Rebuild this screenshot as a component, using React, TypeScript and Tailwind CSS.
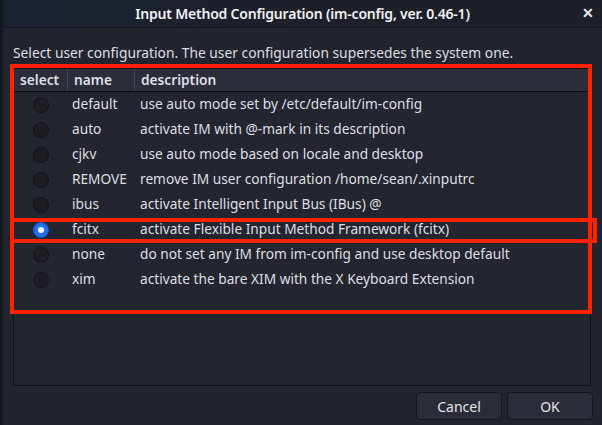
import React from 'react';

type Row = { name: string; description: string };

const ROWS: Row[] = [
  { name: 'default', description: 'use auto mode set by /etc/default/im-config' },
  { name: 'auto', description: 'activate IM with @-mark in its description' },
  { name: 'cjkv', description: 'use auto mode based on locale and desktop' },
  { name: 'REMOVE', description: 'remove IM user configuration /home/sean/.xinputrc' },
  { name: 'ibus', description: 'activate Intelligent Input Bus (IBus) @' },
  { name: 'fcitx', description: 'activate Flexible Input Method Framework (fcitx)' },
  { name: 'none', description: 'do not set any IM from im-config and use desktop default' },
  { name: 'xim', description: 'activate the bare XIM with the X Keyboard Extension' },
];

const SELECTED = 'fcitx';

const Radio: React.FC<{ checked: boolean }> = ({ checked }) =>
  checked ? (
    <span className="w-[16px] h-[16px] rounded-full bg-[#1f6feb] border border-[#1558c8] flex items-center justify-center">
      <span className="w-[6px] h-[6px] rounded-full bg-white" />
    </span>
  ) : (
    <span className="w-[16px] h-[16px] rounded-full bg-[#1c1e24] border border-[#111216]" />
  );

const App: React.FC = () => {
  return (
    <div className="w-[602px] h-[425px] relative overflow-hidden bg-[#22252e] text-[#dedfe2] font-['Noto_Sans',sans-serif] text-[13px] border-l-[3px] border-[#151820]">
      {/* Title bar */}
      <div className="h-[28px] relative flex items-center justify-center bg-gradient-to-r from-[#1a2232] via-[#1d2029] to-[#1d2029] border-b border-[#14161b]">
        <span className="font-semibold text-[14px] text-[#f0f0f0] tracking-[-0.2px]">
          Input Method Configuration (im-config, ver. 0.46-1)
        </span>
        <span className="absolute right-[8px] top-[6px] text-[14px] font-bold text-[#e8e8e8] leading-none">✕</span>
      </div>

      <div className="pl-[10px] pr-[11px]">
        <p className="mt-[15px] h-[20px] leading-[20px] text-[13.8px]">
          Select user configuration. The user configuration supersedes the system one.
        </p>

        {/* List */}
        <div className="mt-[5px] h-[318px] border border-[#111318] bg-[#23262f]">
          <div className="h-[23px] flex bg-[#2b2e39] border-b border-[#0f1014] font-semibold text-[13.7px]">
            <div className="w-[54px] pl-[6px] flex items-center border-r border-[#454957]">select</div>
            <div className="w-[67px] pl-[6px] flex items-center border-r border-[#454957]">name</div>
            <div className="flex-1 pl-[6px] flex items-center">description</div>
          </div>
          {ROWS.map((r) => (
            <div key={r.name} className="h-[25px] flex items-center text-[13.7px]">
              <div className="w-[54px] flex justify-center">
                <Radio checked={r.name === SELECTED} />
              </div>
              <div className="w-[67px] pl-[4px]">{r.name}</div>
              <div className="flex-1 pl-[5px] whitespace-nowrap">{r.description}</div>
            </div>
          ))}
        </div>

        {/* Buttons */}
        <div className="mt-[6px] mr-[-2px] flex justify-end gap-[5px]">
          <button className="w-[86px] h-[28px] rounded-[4px] bg-[#2a2d38] border border-[#14161b] text-[14px] text-[#e4e4e4]">
            Cancel
          </button>
          <button className="w-[86px] h-[28px] rounded-[4px] bg-[#2a2d38] border border-[#14161b] text-[14px] text-[#e4e4e4]">
            OK
          </button>
        </div>
      </div>

      {/* Red annotation boxes */}
      <div className="absolute left-[7px] top-[64px] w-[582px] h-[250px] border-[4px] border-[#ff2200]" />
      <div className="absolute left-[7px] top-[218px] w-[587px] h-[25px] border-[4px] border-[#ff2200]" />
    </div>
  );
};

export default App;
